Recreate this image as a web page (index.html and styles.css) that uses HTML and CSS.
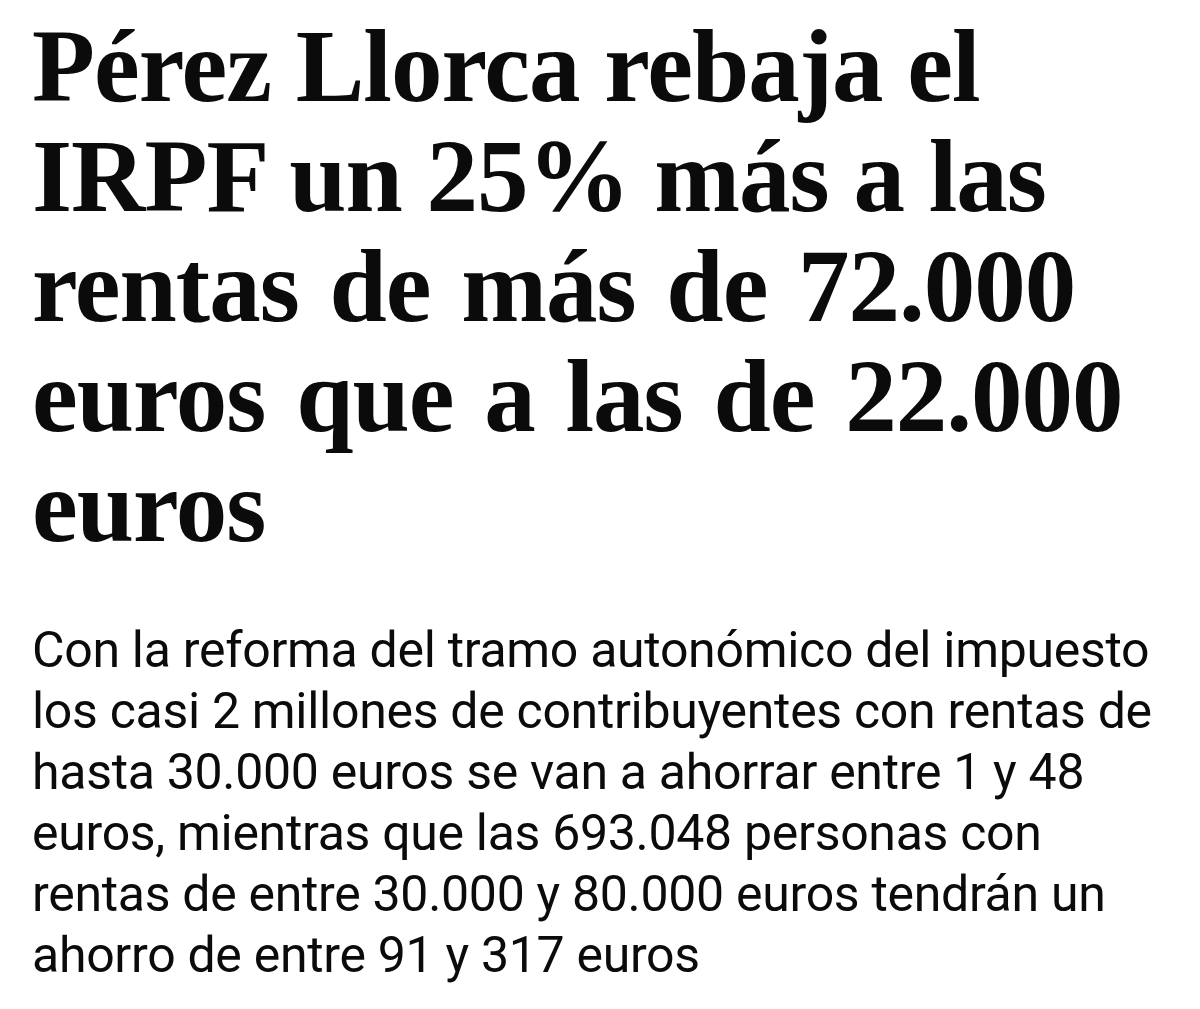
FILE: index.html
```html
<!DOCTYPE html>
<html lang="es">
<head>
<meta charset="utf-8">
<link rel="stylesheet" href="styles.css">
</head>
<body>
<article class="story">
  <h1 class="headline">
    <span class="line">Pérez Llorca rebaja el</span>
    <span class="line">IRPF un 25% más a las</span>
    <span class="line">rentas de más de 72.000</span>
    <span class="line">euros que a las de 22.000</span>
    <span class="line">euros</span>
  </h1>
  <p class="dek">
    <span class="line">Con la reforma del tramo autonómico del impuesto</span>
    <span class="line">los casi 2 millones de contribuyentes con rentas de</span>
    <span class="line">hasta 30.000 euros se van a ahorrar entre 1 y 48</span>
    <span class="line">euros, mientras que las 693.048 personas con</span>
    <span class="line">rentas de entre 30.000 y 80.000 euros tendrán un</span>
    <span class="line">ahorro de entre 91 y 317 euros</span>
  </p>
</article>
</body>
</html>
```

FILE: styles.css
```css
html, body {
  margin: 0;
  padding: 0;
  background: #ffffff;
}
.story {
  padding: 11px 0 0 32px;
  color: #0b0b0b;
}
.line {
  display: block;
  white-space: nowrap;
}
.headline {
  margin: 0;
  font-family: "Liberation Serif", "Times New Roman", serif;
  font-weight: 700;
  font-size: 103px;
  line-height: 110px;
  letter-spacing: -1px;
}
.headline .line:nth-child(3),
.headline .line:nth-child(4) {
  word-spacing: 6px;
}
.dek {
  margin: 59px 0 0 0;
  font-family: "Roboto", sans-serif;
  font-weight: 400;
  font-size: 50px;
  line-height: 61px;
  letter-spacing: -0.3px;
}
```
